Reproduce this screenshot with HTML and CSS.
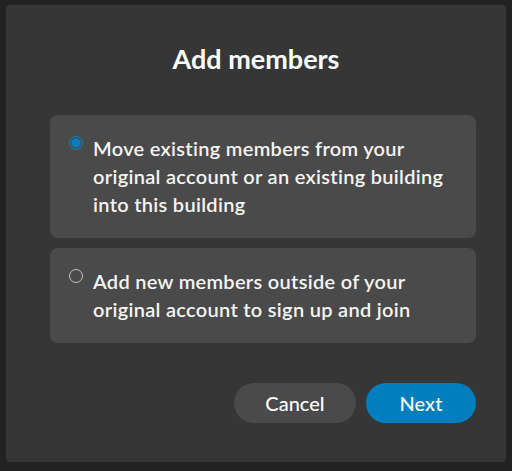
FILE: index.html
```html
<!DOCTYPE html>
<html lang="en">
<head>
    <meta charset="utf-8" />
    <title>Add members</title>
    <link rel="stylesheet" href="styles.css">
</head>
<body>

    <div class="dialog">
        <h1>Add members</h1>

        <div class="options">
            <label class="option">
                <input type="radio" name="mode" checked>
                <span class="radio"></span>
                <span class="option-text">Move existing members from your original account or an existing building into this building</span>
            </label>
            <label class="option">
                <input type="radio" name="mode">
                <span class="radio"></span>
                <span class="option-text">Add new members outside of your original account to sign up and join</span>
            </label>
        </div>

        <div class="actions">
            <button class="btn cancel">Cancel</button>
            <button class="btn next">Next</button>
        </div>
    </div>

</body>
</html>
```

FILE: styles.css
```css
body {
    background: #222;
    color: #f4f4f4;
    font: 600 20px 'Lato', 'Noto Sans', sans-serif;
    margin: 0;
    padding: 5px 6px 9px;
}

.dialog {
    background: #363636;
    border-radius: 4px;
    padding: 0 30px 39px 44px;
    height: 457px;
    box-sizing: border-box;
}

h1 {
    font-size: 27px;
    font-weight: bold;
    text-align: center;
    margin: 0 -30px 0 -44px;
    padding-top: 34px;
    line-height: 40px;
    height: 76px;
    box-sizing: border-box;
    color: #fff;
}

.options {
    margin-top: 34px;
}

.option {
    display: flex;
    align-items: flex-start;
    background: #4a4a4a;
    border-radius: 8px;
    padding: 19px 20px 20px 19px;
    margin-bottom: 10px;
    line-height: 28px;
    cursor: pointer;
}

    .option input {
        display: none;
    }

.option-text {
    letter-spacing: 0.3px;
}

.radio {
    flex: none;
    width: 14px;
    height: 14px;
    margin: 2px 10px 0 0;
    border-radius: 50%;
    box-sizing: border-box;
    border: 1.5px solid #c4c4c4;
}

    .option input:checked + .radio {
        border-color: #0a7ec2;
        background: #0a7ec2;
        box-shadow: inset 0 0 0 1.5px #4a4a4a;
    }

.actions {
    display: flex;
    justify-content: flex-end;
    gap: 10px;
    margin-top: 40px;
}

.btn {
    font: 500 20px 'Lato', 'Noto Sans', sans-serif;
    color: #fff;
    border: none;
    border-radius: 20px;
    height: 40px;
    padding: 0;
}

    .btn.cancel {
        background: #4a4a4a;
        width: 122px;
    }

    .btn.next {
        background: #007ebd;
        width: 110px;
    }
```
